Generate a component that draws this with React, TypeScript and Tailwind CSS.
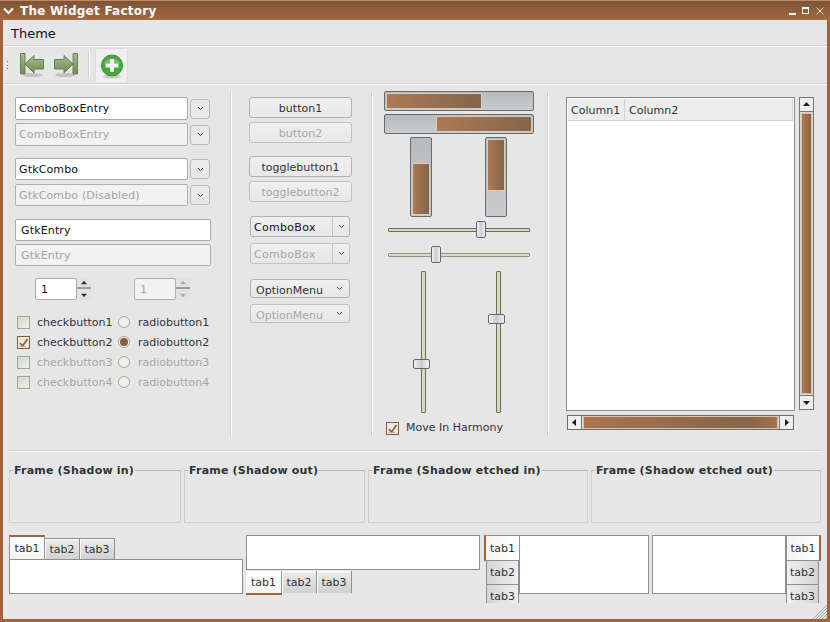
const chevron = (
  <svg width="7" height="5" viewBox="0 0 7 5" className="shrink-0">
    <path d="M1 1 L3.5 3.5 L6 1" fill="none" stroke="#444" strokeWidth="1" />
  </svg>
);

function Tri({ dir, color = "#222", size = 7 }: { dir: "up" | "down" | "left" | "right"; color?: string; size?: number }) {
  const d = {
    up: "M0 5 L3.5 1 L7 5 Z",
    down: "M0 2 L7 2 L3.5 6 Z",
    left: "M5 0 L5 7 L1 3.5 Z",
    right: "M2 0 L6 3.5 L2 7 Z",
  }[dir];
  return (
    <svg width={size} height={size} viewBox="0 0 7 7">
      <path d={d} fill={color} />
    </svg>
  );
}

function Entry({ text, disabled, h = "h-[22px]", w = "w-[173px]", px = "pl-[3px]" }: { text: string; disabled?: boolean; h?: string; w?: string; px?: string }) {
  return (
    <div
      className={`${h} ${w} ${px} flex items-center rounded-[2px] border pt-[2px] tracking-[0.15px] ${
        disabled
          ? "border-[#b0b0b0] bg-[#f2f2f2] text-[#a2a2a2]"
          : "border-[#aaaaaa] bg-white text-[#111]"
      }`}
    >
      {text}
    </div>
  );
}

function ComboEntry({ text, disabled, h }: { text: string; disabled?: boolean; h?: string }) {
  return (
    <div className="flex items-center gap-[1px]">
      <Entry text={text} disabled={disabled} h={h} />
      <div className="ml-[1px] flex h-[20px] w-[20px] items-center justify-center rounded-[3px] border border-[#b8b8b8] bg-[#e9e9e9]">
        {chevron}
      </div>
    </div>
  );
}

function Spin({ disabled }: { disabled?: boolean }) {
  return (
    <div className="flex h-[22px] w-[56px]">
      <div
        className={`flex w-[42px] items-center rounded-[2px] border pl-[5px] pt-[2px] ${
          disabled ? "border-[#b0b0b0] bg-[#f2f2f2] text-[#a2a2a2]" : "border-[#aaaaaa] bg-white text-[#111]"
        }`}
      >
        1
      </div>
      <div className="flex w-[14px] flex-col">
        <div className="flex h-[11px] items-center justify-center border-b-2 border-[#9c9c9c] bg-[#e2e2e2]">
          <Tri dir="up" color={disabled ? "#aaa" : "#333"} size={6} />
        </div>
        <div className="flex h-[11px] items-center justify-center bg-[#e2e2e2]">
          <Tri dir="down" color={disabled ? "#aaa" : "#333"} size={6} />
        </div>
      </div>
    </div>
  );
}

function Check({ checked, className = "" }: { checked?: boolean; className?: string }) {
  return (
    <div
      className={`flex h-[13px] w-[13px] shrink-0 items-center justify-center border ${
        checked ? "border-[#8a5a3a] bg-[#ece9e2]" : "border-[#9aab88] bg-gradient-to-br from-[#d2d8cf] to-[#eef0ec]"
      } ${className}`}
    >
      {checked && (
        <svg width="11" height="11" viewBox="0 0 11 11">
          <path d="M2 6 L4.5 9 L9.5 2" fill="none" stroke="#99623a" strokeWidth="1.8" />
          <path d="M1.5 9.5 H8" stroke="#c9a78e" strokeWidth="1" />
        </svg>
      )}
    </div>
  );
}

function Radio({ checked }: { checked?: boolean }) {
  return (
    <div className="flex h-[12px] w-[12px] shrink-0 items-center justify-center rounded-full border border-[#9fae92] bg-[#eef0ec]">
      {checked && <div className="h-[8px] w-[8px] rounded-full bg-[#8a5a3a]" />}
    </div>
  );
}

function CheckRow({ n, on, off }: { n: number; on?: boolean; off?: boolean }) {
  const textColor = off ? "text-[#a6a6a6]" : "text-[#2e3436]";
  return (
    <div className="flex h-[20px] items-center">
      <Check checked={on} className="ml-[2px]" />
      <span className={`ml-[7px] w-[81px] pt-[2px] ${textColor}`}>checkbutton{n}</span>
      <Radio checked={on} />
      <span className={`ml-[8px] pt-[2px] ${textColor}`}>radiobutton{n}</span>
    </div>
  );
}

function Btn({ text, disabled, className = "" }: { text: string; disabled?: boolean; className?: string }) {
  return (
    <div
      className={`flex h-[21px] w-[103px] justify-center rounded-[3px] border bg-gradient-to-b from-[#f0f0f0] to-[#e8e8e8] pt-[3px] leading-[15px] ${
        disabled ? "border-[#c2c2c2] text-[#a6a6a6]" : "border-[#b2b2b2] text-[#2e3436]"
      } ${className}`}
    >
      {text}
    </div>
  );
}

function ComboBox({ disabled, className = "" }: { disabled?: boolean; className?: string }) {
  return (
    <div
      className={`ml-[1px] flex h-[21px] w-[100px] items-center rounded-[3px] border bg-gradient-to-b from-[#f0f0f0] to-[#e6e6e6] ${
        disabled ? "border-[#c2c2c2] text-[#a6a6a6]" : "border-[#b2b2b2] text-[#111]"
      } ${className}`}
    >
      <span className="h-[19px] w-[82px] border-r border-[#c4c4c4] pl-[3px] pt-[2px] leading-[17px] tracking-[0.3px]">ComboBox</span>
      <span className="flex flex-1 justify-center">{chevron}</span>
    </div>
  );
}

function OptionMenu({ disabled, className = "" }: { disabled?: boolean; className?: string }) {
  return (
    <div
      className={`ml-[1px] flex h-[19px] w-[100px] items-center justify-between rounded-[3px] border bg-gradient-to-b from-[#f0f0f0] to-[#e6e6e6] pl-[5px] pr-[6px] ${
        disabled ? "border-[#c2c2c2] text-[#a6a6a6]" : "border-[#b2b2b2] text-[#2e3436]"
      } ${className}`}
    >
      <span className="pt-[3px] leading-[13px]">OptionMenu</span>
      {chevron}
    </div>
  );
}

function HProgress({ reverse }: { reverse?: boolean }) {
  return (
    <div className={`flex h-[20px] w-[150px] rounded-[2px] border border-[#666b72] bg-gradient-to-b from-[#b9babb] to-[#c8cbcd] p-[1px] ${reverse ? "justify-end" : ""}`}>
      <div className="h-full w-[96px] border border-[#dccbb4] bg-gradient-to-r from-[#ad7a55] to-[#83654a]" />
    </div>
  );
}

function VProgress({ reverse }: { reverse?: boolean }) {
  return (
    <div className={`flex h-[80px] w-[22px] flex-col rounded-[2px] border border-[#666b72] bg-gradient-to-b from-[#b9babb] to-[#c8cbcd] p-[1px] ${reverse ? "" : "justify-end"}`}>
      <div className="h-[52px] w-full border border-[#dccbb4] bg-gradient-to-r from-[#ad7a55] to-[#83654a]" />
    </div>
  );
}

function HScale({ pos, light }: { pos: string; light?: boolean }) {
  return (
    <div className="relative ml-[4px] flex h-[17px] w-[142px] items-center">
      <div className={`h-[4px] w-full rounded-[1px] border ${light ? "border-[#8b9a7c] bg-[#d6dccb]" : "border-[#65734f] bg-[#d3dac8]"}`} />
      <div className={`absolute top-0 h-[17px] w-[10px] rounded-[2px] border border-[#5f6672] bg-gradient-to-r from-[#f0f0f0] via-[#cccccc] to-[#f0f0f0] ${pos}`} />
    </div>
  );
}

function VScale({ pos, className = "" }: { pos: string; className?: string }) {
  return (
    <div className={`relative flex h-[142px] w-[17px] pl-[8px] ${className}`}>
      <div className="h-full w-[5px] rounded-[1px] border border-[#65734f] bg-[#d3dac8]" />
      <div className={`absolute left-0 h-[10px] w-[17px] rounded-[2px] border border-[#5f6672] bg-gradient-to-r from-[#f0f0f0] via-[#cccccc] to-[#f0f0f0] ${pos}`} />
    </div>
  );
}

function ScrollBtn({ dir, className = "" }: { dir: "up" | "down" | "left" | "right"; className?: string }) {
  return (
    <div className={`flex shrink-0 items-center justify-center bg-[#eeeeee] ${className}`}>
      <Tri dir={dir} color="#1c1c1c" />
    </div>
  );
}

function Frame({ label, w }: { label: string; w: string }) {
  return (
    <fieldset className={`h-[61px] ${w} border border-[#cfcfcc] border-t-[#bdb8a8]`}>
      <legend className="ml-[3px] px-[1px] pt-[2px] text-[11px] font-bold leading-[14px] tracking-[0.2px] text-[#2e3436]">
        {label}
      </legend>
    </fieldset>
  );
}

function Vsep() {
  return <div className="h-[346px] w-[2px] shrink-0 border-l border-[#d0d0d0] bg-white" />;
}

function HTab({ text, active, bottom }: { text: string; active?: boolean; bottom?: boolean }) {
  if (active) {
    return (
      <div
        className={`flex w-[36px] items-center justify-center border-[#8e8e96] bg-gradient-to-b from-white to-[#f2f4ee] pt-[2px] text-[#2e3436] ${
          bottom ? "h-[24px] border-b-[2px] border-b-[#a0633c] border-r" : "h-[25px] border-t-[2px] border-t-[#a0633c] border-x"
        }`}
      >
        {text}
      </div>
    );
  }
  return (
    <div
      className={`flex h-[22px] w-[35px] items-center justify-center border-[#8e8e96] bg-gradient-to-b from-[#ececec] to-[#d0d0d0] pt-[2px] text-[#2e3436] shadow-[inset_1px_1px_0_#ffffff] ${
        bottom ? "border-r" : "border-r border-t"
      }`}
    >
      {text}
    </div>
  );
}

function VTabStrip({ right }: { right?: boolean }) {
  const inactive = `flex w-[33px] justify-center border-[#8e8e96] ${
    right ? "bg-gradient-to-l" : "bg-gradient-to-r"
  } from-[#d4d4d4] to-[#f0f0f0] text-[#2e3436]`;
  return (
    <div className={`flex h-[68px] w-[35px] flex-col ${right ? "items-start" : "items-end"}`}>
      <div
        className={`flex h-[26px] w-[35px] items-center justify-center border-y border-[#8e8e96] pt-[2px] text-[#2e3436] ${
          right
            ? "border-r-[2px] border-r-[#a0633c] border-l bg-gradient-to-l from-white to-[#f4f5f0]"
            : "border-l-[2px] border-l-[#a0633c] bg-gradient-to-r from-[#f4f5f0] to-white"
        }`}
      >
        tab1
      </div>
      <div className={`h-[24px] items-center border-x border-b border-b-[#8e8e96] pt-[2px] ${inactive}`}>tab2</div>
      <div className={`h-[18px] items-start border-x pt-[4px] ${inactive}`}>tab3</div>
    </div>
  );
}

function NavArrow({ id, flip, className }: { id: string; flip?: boolean; className: string }) {
  return (
    <svg width="26" height="26" viewBox="0 0 26 26" className={className}>
      <defs>
        <linearGradient id={id} x1="0" y1="0" x2="0" y2="1">
          <stop offset="0" stopColor="#a9bb92" />
          <stop offset="0.55" stopColor="#87a06c" />
          <stop offset="1" stopColor="#6f8a57" />
        </linearGradient>
      </defs>
      <g transform={flip ? "translate(26 0) scale(-1 1)" : undefined}>
        <ellipse cx="14" cy="23" rx="10" ry="2" fill="#c2c2c2" />
        <path d="M1.5 1.5 H6 V22 H1.5 Z" fill={`url(#${id})`} stroke="#6a8052" />
        <path d="M6 12 L15 3.5 V7.5 H24.5 V17 H15 V21 Z" fill={`url(#${id})`} stroke="#6a8052" />
      </g>
    </svg>
  );
}

export default function App() {
  return (
    <div className="flex h-[622px] w-[830px] flex-col overflow-hidden bg-[#a0633c] font-['DejaVu_Sans',sans-serif] text-[11px]">
      {/* title bar */}
      <div className="flex h-[20px] shrink-0 items-center border-t border-[#c08a66] bg-gradient-to-b from-[#7d5437] to-[#a6683f] pl-[3px] pr-[6px] text-white">
        <svg width="11" height="8" viewBox="0 0 11 8">
          <path d="M1 1.5 L5.5 6 L10 1.5" fill="none" stroke="white" strokeWidth="2" />
        </svg>
        <span className="ml-[6px] text-[12px] font-bold tracking-[0.25px]">The Widget Factory</span>
        <div className="ml-auto flex items-center gap-[6px]">
          <div className="mt-[6px] h-[2px] w-[7px] bg-white" />
          <div className="h-[7px] w-[7px] border border-t-2 border-white" />
          <svg width="8" height="8" viewBox="0 0 8 8" className="ml-[1px]">
            <path d="M0.5 0.5 L7.5 7.5 M7.5 0.5 L0.5 7.5" stroke="white" strokeWidth="0.8" />
          </svg>
        </div>
      </div>

      <div className="mx-[3px] mb-[3px] flex h-[599px] flex-col bg-[#e6e6e6] text-[#2e3436]">
        {/* menu */}
        <div className="flex h-[25px] shrink-0 items-center pl-[8px] pt-[2px] text-[13px] text-[#111]">Theme</div>
        <div className="h-[2px] shrink-0 border-t border-[#d2d2d2] bg-white" />

        {/* toolbar */}
        <div className="flex h-[36px] shrink-0 items-center">
          <div className="ml-[4px] flex h-[8px] w-[1px] flex-col justify-between">
            <div className="h-[1px] bg-[#777]" />
            <div className="h-[1px] bg-[#777]" />
            <div className="h-[1px] bg-[#777]" />
          </div>
          <NavArrow id="navBack" className="ml-[11px]" />
          <NavArrow id="navNext" flip className="ml-[8px]" />
          <div className="ml-[9px] h-[26px] w-[2px] border-l border-[#d0d0d0] bg-white" />
          <div className="ml-[5px] flex h-[34px] w-[33px] items-center justify-center rounded-t-[2px] border-x border-t border-[#dcdcdc] bg-[#efefef]">
            <svg width="26" height="26" viewBox="0 0 26 26">
              <ellipse cx="13" cy="23.5" rx="9" ry="2" fill="#cccccc" />
              <circle cx="13" cy="12.5" r="10.5" fill="#4aa73e" stroke="#3c8a35" />
              <path d="M5 10.5 A9 9 0 0 1 21 10.5 Z" fill="#8ed07f" opacity="0.6" />
              <path d="M11 6 H15 V10.5 H19.5 V14.5 H15 V19 H11 V14.5 H6.5 V10.5 H11 Z" fill="#f4f8f2" />
            </svg>
          </div>
        </div>
        <div className="h-[2px] shrink-0 border-t border-[#d2d2d2] bg-white" />

        {/* main columns */}
        <div className="flex h-[365px] shrink-0 pt-[6px]">
          <div className="ml-[12px] flex w-[196px] shrink-0 flex-col pt-[6px]">
            <ComboEntry text="ComboBoxEntry" h="h-[23px]" />
            <div className="mt-[3px]"><ComboEntry text="ComboBoxEntry" disabled h="h-[23px]" /></div>
            <div className="mt-[12px]"><ComboEntry text="GtkCombo" /></div>
            <div className="mt-[4px]"><ComboEntry text="GtkCombo (Disabled)" disabled /></div>
            <div className="mt-[13px]"><Entry text="GtkEntry" w="w-[196px]" px="pl-[5px]" /></div>
            <div className="mt-[3px]"><Entry text="GtkEntry" disabled w="w-[196px]" px="pl-[5px]" /></div>
            <div className="mt-[12px] flex pl-[20px]">
              <Spin />
              <div className="ml-[43px]"><Spin disabled /></div>
            </div>
            <div className="mt-[12px] flex flex-col">
              <CheckRow n={1} />
              <CheckRow n={2} on />
              <CheckRow n={3} off />
              <CheckRow n={4} off />
            </div>
          </div>

          <div className="ml-[19px]"><Vsep /></div>

          <div className="ml-[17px] flex w-[103px] shrink-0 flex-col pt-[6px]">
            <Btn text="button1" />
            <Btn text="button2" disabled className="mt-[4px]" />
            <Btn text="togglebutton1" className="mt-[13px]" />
            <Btn text="togglebutton2" disabled className="mt-[4px]" />
            <ComboBox className="mt-[14px]" />
            <ComboBox disabled className="mt-[6px]" />
            <OptionMenu className="mt-[15px]" />
            <OptionMenu disabled className="mt-[6px]" />
          </div>

          <div className="ml-[19px]"><Vsep /></div>

          <div className="ml-[11px] flex w-[150px] shrink-0 flex-col">
            <HProgress />
            <div className="mt-[3px]"><HProgress reverse /></div>
            <div className="mt-[3px] flex pl-[26px]">
              <VProgress />
              <div className="ml-[53px]"><VProgress reverse /></div>
            </div>
            <div className="mt-[4px]"><HScale pos="left-[88px]" /></div>
            <div className="mt-[8px]"><HScale pos="left-[43px]" light /></div>
            <div className="mt-[8px] flex pl-[29px]">
              <VScale pos="top-[88px]" />
              <VScale pos="top-[43px]" className="ml-[58px]" />
            </div>
            <div className="mt-[7px] flex items-center pl-[2px]">
              <Check checked />
              <span className="ml-[7px]">Move In Harmony</span>
            </div>
          </div>

          <div className="ml-[13px]"><Vsep /></div>

          <div className="ml-[17px] flex w-[248px] shrink-0 flex-col pt-[6px]">
            <div className="flex">
              <div className="h-[314px] w-[229px] border border-[#8a8a8a] bg-white p-[1px]">
                <div className="flex h-[22px] bg-[#ededed] text-[#2e3436]">
                  <div className="flex w-[57px] items-center border-b border-r border-[#d2d2d2] pl-[3px] pt-[4px]">Column1</div>
                  <div className="flex flex-1 items-center border-b border-r border-[#d2d2d2] pl-[4px] pt-[4px]">Column2</div>
                </div>
              </div>
              <div className="ml-[4px] flex h-[313px] w-[15px] flex-col border border-[#777] bg-[#d6d6d6]">
                <ScrollBtn dir="up" className="h-[14px] w-[13px] border-b border-[#777]" />
                <div className="m-[1px] flex-1 border border-[#d8c4aa] bg-gradient-to-r from-[#ae7850] to-[#8c6044]" />
                <ScrollBtn dir="down" className="h-[14px] w-[13px] border-t border-[#777]" />
              </div>
            </div>
            <div className="ml-[1px] mt-[4px] flex h-[15px] w-[227px] items-center border border-[#6d6d6d] bg-[#d6d6d6]">
              <ScrollBtn dir="left" className="h-[13px] w-[14px] border-r border-[#777]" />
              <div className="mx-[1px] h-[13px] flex-1 border border-[#d8c4aa] bg-gradient-to-r from-[#ab7350] via-[#85654c] via-85% to-[#a37250]" />
              <ScrollBtn dir="right" className="h-[13px] w-[14px] border-l border-[#777]" />
            </div>
          </div>
        </div>

        {/* lower part */}
        <div className="ml-[6px] h-[2px] w-[812px] shrink-0 border-t border-[#d0d0d0] bg-white" />
        <div className="ml-[6px] mt-[10px] flex h-[61px] shrink-0 gap-[3px]">
          <Frame label="Frame (Shadow in)" w="w-[172px]" />
          <Frame label="Frame (Shadow out)" w="w-[181px]" />
          <Frame label="Frame (Shadow etched in)" w="w-[220px]" />
          <Frame label="Frame (Shadow etched out)" w="w-[230px]" />
        </div>

        <div className="ml-[6px] mt-[12px] flex h-[68px] shrink-0">
          <div className="flex w-[234px] flex-col">
            <div className="flex h-[25px] items-end">
              <HTab text="tab1" active />
              <HTab text="tab2" />
              <HTab text="tab3" />
            </div>
            <div className="-mt-[1px] h-[35px] border border-[#8e8e96] bg-white" />
          </div>
          <div className="ml-[3px] flex w-[234px] flex-col">
            <div className="h-[35px] border border-[#8e8e96] bg-white" />
            <div className="mt-[1px] flex items-start">
              <HTab text="tab1" active bottom />
              <HTab text="tab2" bottom />
              <HTab text="tab3" bottom />
            </div>
          </div>
          <div className="ml-[4px] flex w-[165px] overflow-hidden">
            <VTabStrip />
            <div className="h-[59px] flex-1 border border-[#8e8e96] bg-white" />
          </div>
          <div className="ml-[3px] flex w-[169px] overflow-hidden">
            <div className="h-[59px] flex-1 border border-[#8e8e96] bg-white" />
            <VTabStrip right />
          </div>
        </div>

        <div className="mt-auto flex justify-end">
          <svg width="14" height="14" viewBox="0 0 14 14" className="-mt-[14px]">
            <path d="M14 0 L0 14 M14 3 L3 14 M14 6 L6 14 M14 9 L9 14 M14 12 L12 14" stroke="#a5a5a5" strokeWidth="1" />
          </svg>
        </div>
      </div>
    </div>
  );
}
